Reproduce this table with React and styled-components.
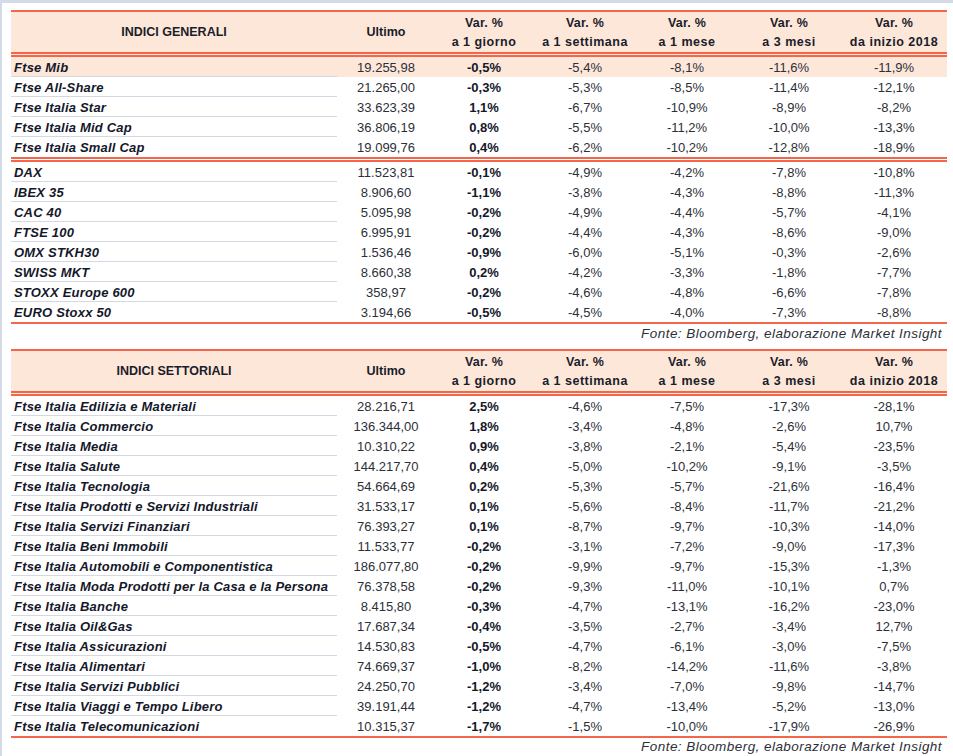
import React from "react";
import styled, { createGlobalStyle } from "styled-components";

const GlobalStyle = createGlobalStyle`
  body {
    margin: 0;
    background: #fff;
    font-family: "Liberation Sans", Arial, sans-serif;
    color: #1b1b24;
  }
`;

const RED = "#f2664c";
const PEACH = "#fde7d9";
const COLS = "326px 98px 98px 104px 100px 104px 106px";

const Frame = styled.div`
  width: 953px;
  height: 756px;
  box-sizing: border-box;
  border-top: 3px solid #d3dbe9;
  border-left: 2px solid #d3dbe9;
  padding: 7px 0 0 9px;
  overflow: hidden;
`;

const Table = styled.div`
  width: 936px;
  border-top: 2px solid ${RED};
  border-bottom: 2px solid ${RED};
`;

const Head = styled.div`
  display: grid;
  grid-template-columns: ${COLS};
  height: 40px;
  background: ${PEACH};
  border-bottom: 5px double ${RED};
  font-weight: bold;
  font-size: 12.5px;
  color: #1a1d2b;
`;

const HeadCell = styled.div`
  display: flex;
  flex-direction: column;
  align-items: center;
  justify-content: center;
  gap: 5px;
  text-align: center;
  white-space: nowrap;
`;

const Period = styled.span`
  letter-spacing: ${(p) => (p.$wide ? "0.5px" : "0.2px")};
`;

const Group = styled.div`
  & + & {
    border-top: 5px double ${RED};
  }
`;

const Row = styled.div`
  display: grid;
  grid-template-columns: ${COLS};
  height: 20px;
  background: ${(p) => (p.$hl ? PEACH : "transparent")};
`;

const Name = styled.div`
  display: flex;
  align-items: center;
  padding-left: 3px;
  padding-top: 1px;
  font-weight: bold;
  font-style: italic;
  font-size: 13px;
  letter-spacing: 0.2px;
  color: #14182a;
  white-space: nowrap;
  box-sizing: border-box;
  border-bottom: 1px solid ${(p) => (p.$last ? "transparent" : "#d3d8e2")};
`;

const Num = styled.div`
  display: flex;
  align-items: center;
  justify-content: center;
  font-size: 13px;
  font-weight: ${(p) => (p.$bold ? "bold" : "normal")};
  color: ${(p) => (p.$bold ? "#14182a" : "#2d2f38")};
`;

const Source = styled.div`
  width: 936px;
  text-align: right;
  font-style: italic;
  font-size: 13.5px;
  letter-spacing: 0.45px;
  color: #2d2f38;
  height: ${(p) => p.$h}px;
  line-height: ${(p) => p.$lh}px;
  box-sizing: border-box;
  padding-right: 5px;
`;

const generali = [
  [
    ["Ftse Mib", "19.255,98", "-0,5%", "-5,4%", "-8,1%", "-11,6%", "-11,9%", true],
    ["Ftse All-Share", "21.265,00", "-0,3%", "-5,3%", "-8,5%", "-11,4%", "-12,1%"],
    ["Ftse Italia Star", "33.623,39", "1,1%", "-6,7%", "-10,9%", "-8,9%", "-8,2%"],
    ["Ftse Italia Mid Cap", "36.806,19", "0,8%", "-5,5%", "-11,2%", "-10,0%", "-13,3%"],
    ["Ftse Italia Small Cap", "19.099,76", "0,4%", "-6,2%", "-10,2%", "-12,8%", "-18,9%"],
  ],
  [
    ["DAX", "11.523,81", "-0,1%", "-4,9%", "-4,2%", "-7,8%", "-10,8%"],
    ["IBEX 35", "8.906,60", "-1,1%", "-3,8%", "-4,3%", "-8,8%", "-11,3%"],
    ["CAC 40", "5.095,98", "-0,2%", "-4,9%", "-4,4%", "-5,7%", "-4,1%"],
    ["FTSE 100", "6.995,91", "-0,2%", "-4,4%", "-4,3%", "-8,6%", "-9,0%"],
    ["OMX STKH30", "1.536,46", "-0,9%", "-6,0%", "-5,1%", "-0,3%", "-2,6%"],
    ["SWISS MKT", "8.660,38", "0,2%", "-4,2%", "-3,3%", "-1,8%", "-7,7%"],
    ["STOXX Europe 600", "358,97", "-0,2%", "-4,6%", "-4,8%", "-6,6%", "-7,8%"],
    ["EURO Stoxx 50", "3.194,66", "-0,5%", "-4,5%", "-4,0%", "-7,3%", "-8,8%"],
  ],
];

const settoriali = [
  [
    ["Ftse Italia Edilizia e Materiali", "28.216,71", "2,5%", "-4,6%", "-7,5%", "-17,3%", "-28,1%"],
    ["Ftse Italia Commercio", "136.344,00", "1,8%", "-3,4%", "-4,8%", "-2,6%", "10,7%"],
    ["Ftse Italia Media", "10.310,22", "0,9%", "-3,8%", "-2,1%", "-5,4%", "-23,5%"],
    ["Ftse Italia Salute", "144.217,70", "0,4%", "-5,0%", "-10,2%", "-9,1%", "-3,5%"],
    ["Ftse Italia Tecnologia", "54.664,69", "0,2%", "-5,3%", "-5,7%", "-21,6%", "-16,4%"],
    ["Ftse Italia Prodotti e Servizi Industriali", "31.533,17", "0,1%", "-5,6%", "-8,4%", "-11,7%", "-21,2%"],
    ["Ftse Italia Servizi Finanziari", "76.393,27", "0,1%", "-8,7%", "-9,7%", "-10,3%", "-14,0%"],
    ["Ftse Italia Beni Immobili", "11.533,77", "-0,2%", "-3,1%", "-7,2%", "-9,0%", "-17,3%"],
    ["Ftse Italia Automobili e Componentistica", "186.077,80", "-0,2%", "-9,9%", "-9,7%", "-15,3%", "-1,3%"],
    ["Ftse Italia Moda Prodotti per la Casa e la Persona", "76.378,58", "-0,2%", "-9,3%", "-11,0%", "-10,1%", "0,7%"],
    ["Ftse Italia Banche", "8.415,80", "-0,3%", "-4,7%", "-13,1%", "-16,2%", "-23,0%"],
    ["Ftse Italia Oil&Gas", "17.687,34", "-0,4%", "-3,5%", "-2,7%", "-3,4%", "12,7%"],
    ["Ftse Italia Assicurazioni", "14.530,83", "-0,5%", "-4,7%", "-6,1%", "-3,0%", "-7,5%"],
    ["Ftse Italia Alimentari", "74.669,37", "-1,0%", "-8,2%", "-14,2%", "-11,6%", "-3,8%"],
    ["Ftse Italia Servizi Pubblici", "24.250,70", "-1,2%", "-3,4%", "-7,0%", "-9,8%", "-14,7%"],
    ["Ftse Italia Viaggi e Tempo Libero", "39.191,44", "-1,2%", "-4,7%", "-13,4%", "-5,2%", "-13,0%"],
    ["Ftse Italia Telecomunicazioni", "10.315,37", "-1,7%", "-1,5%", "-10,0%", "-17,9%", "-26,9%"],
  ],
];

const periods = ["a 1 giorno", "a 1 settimana", "a 1 mese", "a 3 mesi", "da inizio 2018"];

const IndexTable = ({ title, groups }) => (
  <Table>
    <Head>
      <HeadCell>{title}</HeadCell>
      <HeadCell>Ultimo</HeadCell>
      {periods.map((p) => (
        <HeadCell key={p}>
          <Period>Var. %</Period>
          <Period $wide>{p}</Period>
        </HeadCell>
      ))}
    </Head>
    {groups.map((rows, gi) => (
      <Group key={gi}>
        {rows.map((r, i) => (
          <Row key={r[0]} $hl={r[7]}>
            <Name $last={i === rows.length - 1}>{r[0]}</Name>
            <Num>{r[1]}</Num>
            <Num $bold>{r[2]}</Num>
            <Num>{r[3]}</Num>
            <Num>{r[4]}</Num>
            <Num>{r[5]}</Num>
            <Num>{r[6]}</Num>
          </Row>
        ))}
      </Group>
    ))}
  </Table>
);

export default function App() {
  return (
    <>
      <GlobalStyle />
      <Frame>
        <IndexTable title="INDICI GENERALI" groups={generali} />
        <Source $h={25} $lh={19}>Fonte: Bloomberg, elaborazione Market Insight</Source>
        <IndexTable title="INDICI SETTORIALI" groups={settoriali} />
        <Source $h={18} $lh={17}>Fonte: Bloomberg, elaborazione Market Insight</Source>
      </Frame>
    </>
  );
}
